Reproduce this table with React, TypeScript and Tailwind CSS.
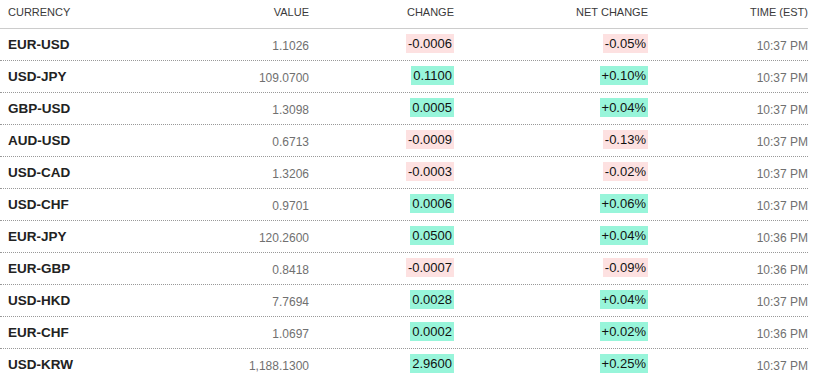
import React from "react";

type Row = { pair: string; value: string; change: string; net: string; time: string };

const rows: Row[] = [
  { pair: "EUR-USD", value: "1.1026", change: "-0.0006", net: "-0.05%", time: "10:37 PM" },
  { pair: "USD-JPY", value: "109.0700", change: "0.1100", net: "+0.10%", time: "10:37 PM" },
  { pair: "GBP-USD", value: "1.3098", change: "0.0005", net: "+0.04%", time: "10:37 PM" },
  { pair: "AUD-USD", value: "0.6713", change: "-0.0009", net: "-0.13%", time: "10:37 PM" },
  { pair: "USD-CAD", value: "1.3206", change: "-0.0003", net: "-0.02%", time: "10:37 PM" },
  { pair: "USD-CHF", value: "0.9701", change: "0.0006", net: "+0.06%", time: "10:37 PM" },
  { pair: "EUR-JPY", value: "120.2600", change: "0.0500", net: "+0.04%", time: "10:36 PM" },
  { pair: "EUR-GBP", value: "0.8418", change: "-0.0007", net: "-0.09%", time: "10:36 PM" },
  { pair: "USD-HKD", value: "7.7694", change: "0.0028", net: "+0.04%", time: "10:37 PM" },
  { pair: "EUR-CHF", value: "1.0697", change: "0.0002", net: "+0.02%", time: "10:36 PM" },
  { pair: "USD-KRW", value: "1,188.1300", change: "2.9600", net: "+0.25%", time: "10:37 PM" },
];

function Badge({ text }: { text: string }) {
  const neg = text.startsWith("-");
  return (
    <span
      className={
        neg
          ? "inline-block h-[19px] bg-[#fde1e1] px-[2px] align-middle text-[13px] leading-[19px] text-[#111]"
          : "inline-block h-[19px] bg-[#98f5da] px-[2px] align-middle text-[13px] leading-[19px] text-[#111]"
      }
    >
      {text}
    </span>
  );
}

export default function App() {
  return (
    <div
      className="w-[808px] bg-white"
      style={{ fontFamily: '"Liberation Sans", Arial, sans-serif' }}
    >
      <div className="grid h-[29px] grid-cols-[200px_109px_145px_194px_160px] border-b border-[#cccccc] pt-[5px] text-[11px] leading-[14px] text-[#3a3a3a]">
        <div className="pl-[8px]">CURRENCY</div>
        <div className="text-right">VALUE</div>
        <div className="text-right">CHANGE</div>
        <div className="text-right">NET CHANGE</div>
        <div className="text-right">TIME (EST)</div>
      </div>
      {rows.map((r) => (
        <div
          key={r.pair}
          className="grid h-[32px] grid-cols-[200px_109px_145px_194px_160px] items-center border-b border-dotted border-[#999] pt-[2px]"
        >
          <div className="pl-[8px] text-[13.5px] font-bold text-[#222]">{r.pair}</div>
          <div className="text-right text-[12px] text-[#707070]">{r.value}</div>
          <div className="flex justify-end pb-[4px]">
            <Badge text={r.change} />
          </div>
          <div className="flex justify-end pb-[4px]">
            <Badge text={r.net} />
          </div>
          <div className="text-right text-[12px] text-[#707070]">{r.time}</div>
        </div>
      ))}
    </div>
  );
}
